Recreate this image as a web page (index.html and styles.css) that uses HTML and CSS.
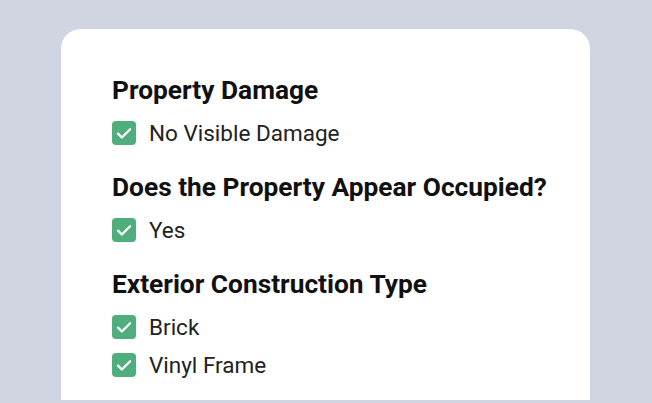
FILE: index.html
```html
<!DOCTYPE html>
<html lang="en">
<head>
<meta charset="utf-8">
<link rel="stylesheet" href="styles.css">
</head>
<body>
<main class="card">
  <section class="group">
    <h2 class="group-title">Property Damage</h2>
    <ul class="options">
      <li class="option"><span class="check"><svg viewBox="0 0 24 24"><path d="M6 12.6l3.9 3.9 8.2-8.3"/></svg></span>No Visible Damage</li>
    </ul>
  </section>
  <section class="group">
    <h2 class="group-title">Does the Property Appear Occupied?</h2>
    <ul class="options">
      <li class="option"><span class="check"><svg viewBox="0 0 24 24"><path d="M6 12.6l3.9 3.9 8.2-8.3"/></svg></span>Yes</li>
    </ul>
  </section>
  <section class="group">
    <h2 class="group-title">Exterior Construction Type</h2>
    <ul class="options">
      <li class="option"><span class="check"><svg viewBox="0 0 24 24"><path d="M6 12.6l3.9 3.9 8.2-8.3"/></svg></span>Brick</li>
      <li class="option"><span class="check"><svg viewBox="0 0 24 24"><path d="M6 12.6l3.9 3.9 8.2-8.3"/></svg></span>Vinyl Frame</li>
    </ul>
  </section>
</main>
</body>
</html>
```
FILE: styles.css
```css
html, body {
  margin: 0;
  padding: 0;
}
body {
  background: #d1d4e1;
  font-family: Roboto, "Liberation Sans", sans-serif;
  height: 403px;
  overflow: hidden;
}
.card {
  box-sizing: border-box;
  margin: 29px 0 0 61px;
  width: 529px;
  height: 371px;
  background: #ffffff;
  border-radius: 20px 20px 0 0;
  padding: 46px 0 0 51px;
  display: flex;
  flex-direction: column;
  gap: 27px;
}
.group-title {
  margin: 0 0 16px;
  font-size: 26.3px;
  line-height: 30px;
  font-weight: 700;
  color: #111111;
}
.options {
  list-style: none;
  margin: 0;
  padding: 0;
  display: flex;
  flex-direction: column;
  gap: 14px;
}
.option {
  display: flex;
  align-items: center;
  gap: 13px;
  font-size: 22.5px;
  line-height: 24px;
  color: #222222;
}
.check {
  width: 24px;
  height: 24px;
  border-radius: 4px;
  background: #4fae7b;
  flex: none;
  display: flex;
}
.check svg {
  width: 24px;
  height: 24px;
  fill: none;
  stroke: #ffffff;
  stroke-width: 2.3;
  stroke-linecap: round;
  stroke-linejoin: round;
}
```
